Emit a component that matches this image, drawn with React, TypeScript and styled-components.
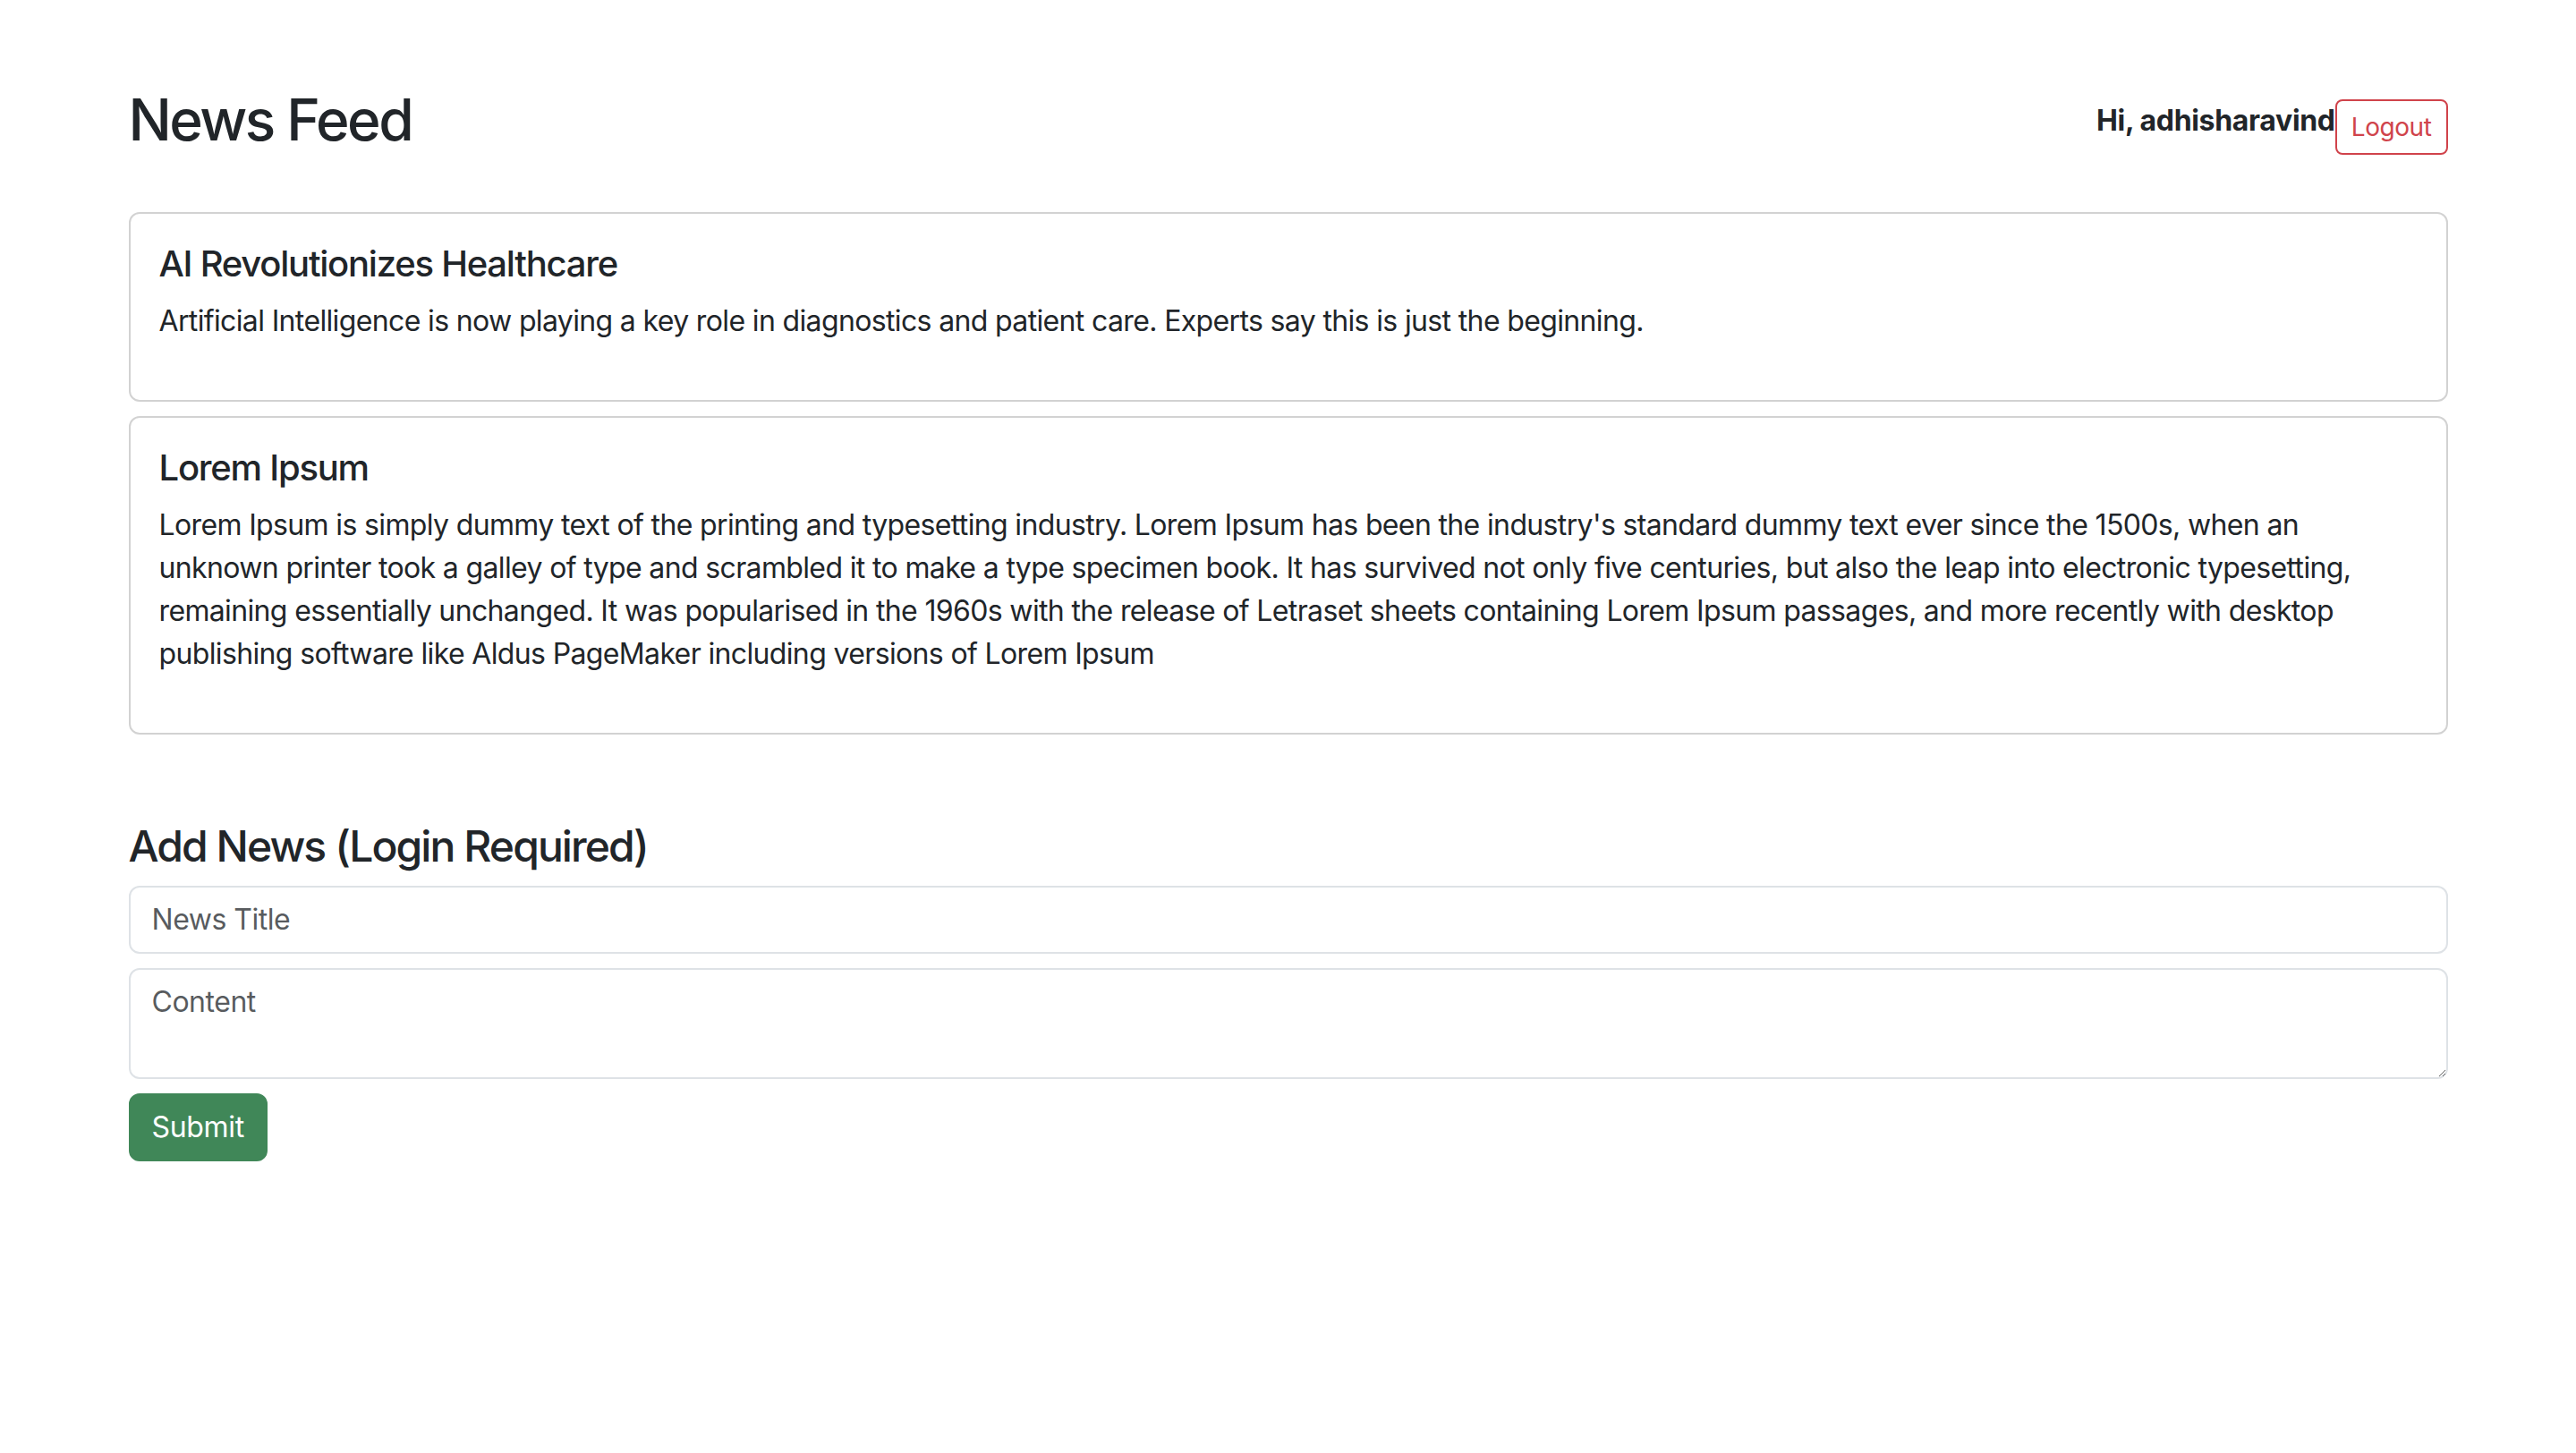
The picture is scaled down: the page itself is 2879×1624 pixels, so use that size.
import React from "react";
import styled, { createGlobalStyle } from "styled-components";

const GlobalStyle = createGlobalStyle`
  *, *::before, *::after { box-sizing: border-box; }
  html, body { margin: 0; padding: 0; background: #ffffff; }
  body {
    font-family: Inter, "Noto Sans", "Liberation Sans", sans-serif;
    color: #212529;
    font-size: 32px;
    line-height: 1.5;
  }
`;

const Container = styled.div`
  max-width: 2640px;
  margin: 96px auto 0;
  padding: 0 24px;
`;

const Header = styled.header`
  display: flex;
  justify-content: space-between;
  align-items: center;
  margin-bottom: 48px;
`;

const PageTitle = styled.h2`
  margin: 0 0 16px;
  font-size: 64px;
  font-weight: 500;
  line-height: 1.2;
  letter-spacing: -0.04em;
`;

const UserBox = styled.div`
  display: flex;
`;

const Greeting = styled.span`
  font-weight: 700;
  font-size: 32px;
  line-height: 1.5;
  letter-spacing: -0.01em;
`;

const LogoutButton = styled.button`
  font-family: inherit;
  font-size: 28px;
  line-height: 1.5;
  letter-spacing: -0.015em;
  padding: 8px 16px;
  color: #d0434b;
  background: transparent;
  border: 2px solid #d0434b;
  border-radius: 8px;
  cursor: pointer;
`;

const FeedList = styled.div`
  display: flex;
  flex-direction: column;
  gap: 16px;
`;

const Card = styled.article`
  border: 2px solid rgba(0, 0, 0, 0.175);
  border-radius: 12px;
  padding: 32px;
`;

const CardTitle = styled.h5`
  margin: 0 0 16px;
  font-size: 40px;
  font-weight: 500;
  line-height: 1.2;
  letter-spacing: -0.031em;
`;

const CardText = styled.p`
  margin: 0 0 32px;
  font-size: 32px;
  line-height: 1.5;
  letter-spacing: -0.02em;
`;

const FormSection = styled.section`
  margin-top: 96px;
`;

const SectionTitle = styled.h4`
  margin: 0 0 16px;
  font-size: 48px;
  font-weight: 500;
  line-height: 1.2;
  letter-spacing: -0.04em;
`;

const fieldStyles = `
  display: block;
  width: 100%;
  font-family: inherit;
  font-size: 32px;
  line-height: 1.5;
  letter-spacing: -0.015em;
  color: #212529;
  padding: 12px 24px;
  border: 2px solid #dee2e6;
  border-radius: 12px;
  background: #ffffff;
  margin: 0 0 16px;
  &::placeholder { color: rgba(33, 37, 41, 0.75); }
`;

const TextInput = styled.input`
  ${fieldStyles}
`;

const TextArea = styled.textarea`
  ${fieldStyles}
  resize: vertical;
  height: 124px;
`;

const SubmitButton = styled.button`
  font-family: inherit;
  font-size: 32px;
  line-height: 1.5;
  letter-spacing: -0.01em;
  padding: 12px 24px;
  color: #ffffff;
  background: #408758;
  border: 2px solid #408758;
  border-radius: 12px;
  cursor: pointer;
`;

const news = [
  {
    title: "AI Revolutionizes Healthcare",
    content:
      "Artificial Intelligence is now playing a key role in diagnostics and patient care. Experts say this is just the beginning.",
  },
  {
    title: "Lorem Ipsum",
    content:
      "Lorem Ipsum is simply dummy text of the printing and typesetting industry. Lorem Ipsum has been the industry's standard dummy text ever since the 1500s, when an unknown printer took a galley of type and scrambled it to make a type specimen book. It has survived not only five centuries, but also the leap into electronic typesetting, remaining essentially unchanged. It was popularised in the 1960s with the release of Letraset sheets containing Lorem Ipsum passages, and more recently with desktop publishing software like Aldus PageMaker including versions of Lorem Ipsum",
  },
];

export default function App() {
  return (
    <>
      <GlobalStyle />
      <Container>
        <Header>
          <PageTitle>News Feed</PageTitle>
          <UserBox>
            <Greeting>Hi, adhisharavind</Greeting>
            <LogoutButton type="button">Logout</LogoutButton>
          </UserBox>
        </Header>
        <FeedList>
          {news.map((item) => (
            <Card key={item.title}>
              <CardTitle>{item.title}</CardTitle>
              <CardText>{item.content}</CardText>
            </Card>
          ))}
        </FeedList>
        <FormSection>
          <SectionTitle>Add News (Login Required)</SectionTitle>
          <form onSubmit={(e) => e.preventDefault()}>
            <TextInput type="text" placeholder="News Title" />
            <TextArea rows={2} placeholder="Content" />
            <SubmitButton type="submit">Submit</SubmitButton>
          </form>
        </FormSection>
      </Container>
    </>
  );
}
